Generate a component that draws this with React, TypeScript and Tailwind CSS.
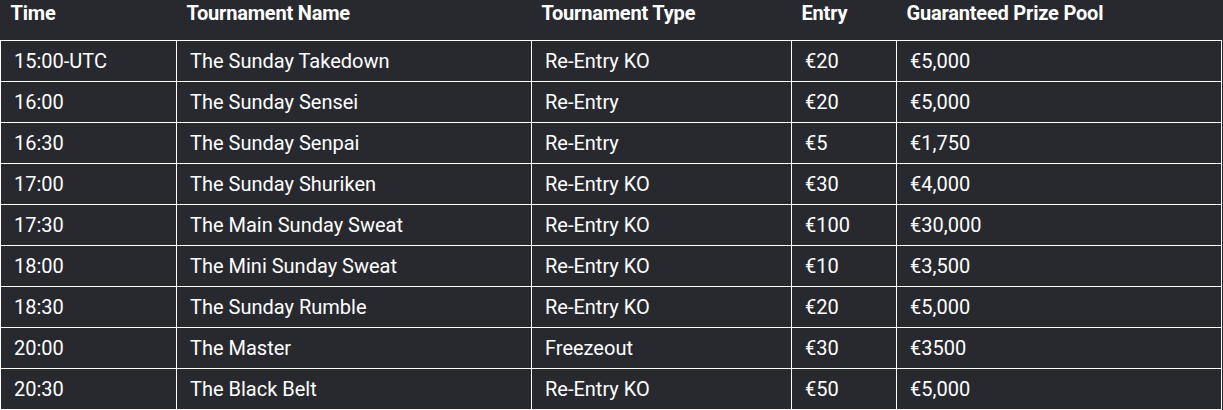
import React from "react";

const rows = [
  ["15:00-UTC", "The Sunday Takedown", "Re-Entry KO", "€20", "€5,000"],
  ["16:00", "The Sunday Sensei", "Re-Entry", "€20", "€5,000"],
  ["16:30", "The Sunday Senpai", "Re-Entry", "€5", "€1,750"],
  ["17:00", "The Sunday Shuriken", "Re-Entry KO", "€30", "€4,000"],
  ["17:30", "The Main Sunday Sweat", "Re-Entry KO", "€100", "€30,000"],
  ["18:00", "The Mini Sunday Sweat", "Re-Entry KO", "€10", "€3,500"],
  ["18:30", "The Sunday Rumble", "Re-Entry KO", "€20", "€5,000"],
  ["20:00", "The Master", "Freezeout", "€30", "€3500"],
  ["20:30", "The Black Belt", "Re-Entry KO", "€50", "€5,000"],
];

const headers = ["Time", "Tournament Name", "Tournament Type", "Entry", "Guaranteed Prize Pool"];

export default function App() {
  return (
    <div className="w-[1223px] h-[410px] overflow-hidden bg-[#28292f] text-white font-['Roboto',sans-serif]">
      <table className="table-fixed border-collapse w-[1221px]">
        <colgroup>
          <col className="w-[176px]" />
          <col className="w-[355px]" />
          <col className="w-[260px]" />
          <col className="w-[105px]" />
          <col className="w-[325px]" />
        </colgroup>
        <thead>
          <tr className="h-[40px]">
            {headers.map((h) => (
              <th
                key={h}
                className="text-left align-top pt-0 pl-[10px] text-[20px] font-bold tracking-[-0.2px] leading-[26px]"
              >
                {h}
              </th>
            ))}
          </tr>
        </thead>
        <tbody>
          {rows.map((r, i) => (
            <tr key={i} className="h-[41px]">
              {r.map((c, j) => (
                <td
                  key={j}
                  className="border border-white pl-[13px] text-[20px] leading-[24px] align-middle"
                >
                  {c}
                </td>
              ))}
            </tr>
          ))}
        </tbody>
      </table>
    </div>
  );
}
